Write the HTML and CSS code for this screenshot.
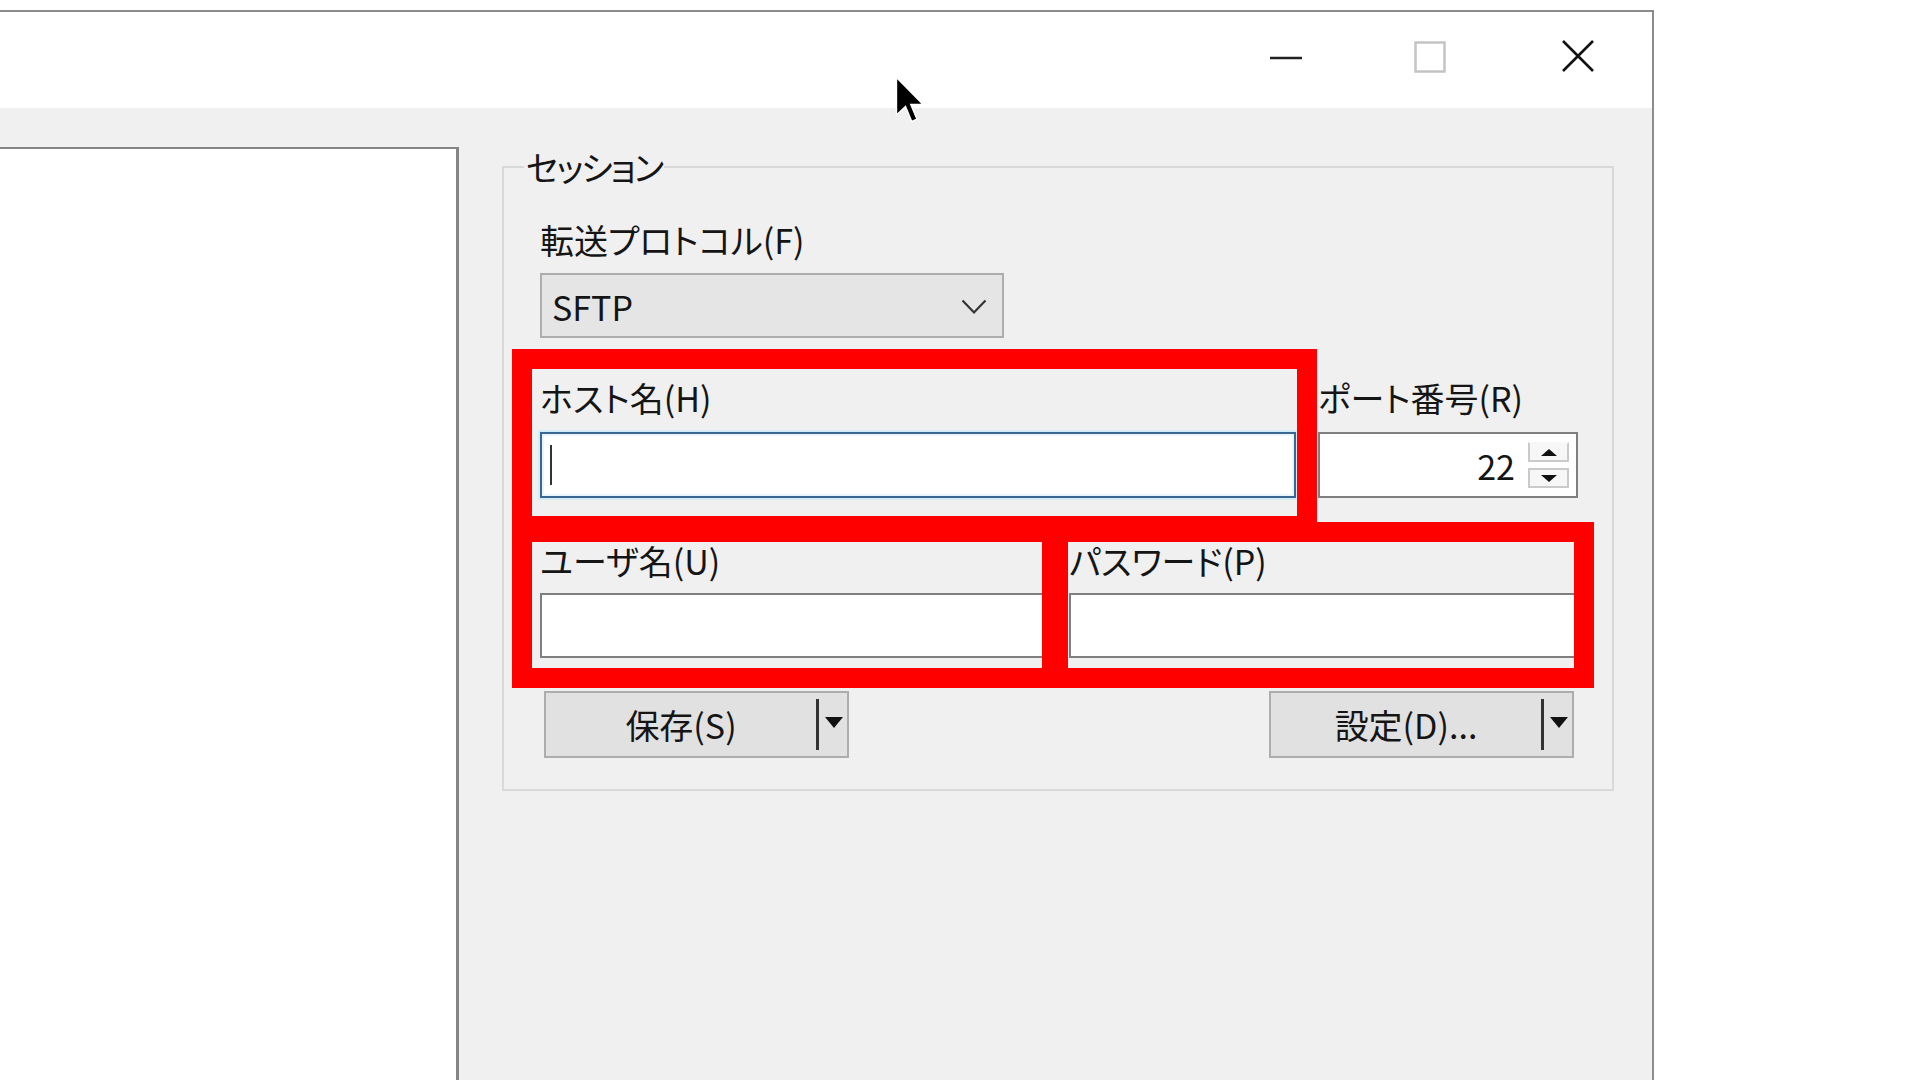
FILE: index.html
```html
<!DOCTYPE html>
<html lang="ja">
<head>
<meta charset="utf-8">
<title>ログイン</title>
<link rel="stylesheet" href="styles.css">
</head>
<body>
<div class="screen">
  <div class="window">
    <div class="titlebar">
      <div class="capbtn cap-min">
        <svg width="34" height="4" viewBox="0 0 34 4"><line x1="1" y1="2" x2="33" y2="2" stroke="#222" stroke-width="2.5"/></svg>
      </div>
      <div class="capbtn cap-max">
        <svg width="32" height="32" viewBox="0 0 32 32"><rect x="1.5" y="1.5" width="29" height="29" fill="none" stroke="#c4c4c4" stroke-width="2.5"/></svg>
      </div>
      <div class="capbtn cap-close">
        <svg width="34" height="34" viewBox="0 0 34 34"><path d="M2 2 L32 32 M32 2 L2 32" stroke="#111" stroke-width="2.6" fill="none"/></svg>
      </div>
    </div>
    <div class="client">
      <div class="sitepanel"></div>
      <fieldset class="session">
        <legend class="legend">セッション</legend>
        <div class="form">
          <div class="field proto">
            <label class="lbl">転送プロトコル(F)</label>
            <div class="combo">
              <span class="combo-text">SFTP</span>
              <svg class="chev" width="26" height="16" viewBox="0 0 26 16"><polyline points="1.5,1.5 13,13.5 24.5,1.5" fill="none" stroke="#333" stroke-width="2.2"/></svg>
            </div>
          </div>
          <div class="row host-row">
            <div class="field">
              <label class="lbl">ホスト名(H)</label>
              <div class="edit focused"><span class="caret"></span></div>
            </div>
            <div class="field">
              <label class="lbl">ポート番号(R)</label>
              <div class="edit port">
                <span class="num">22</span>
                <div class="spin">
                  <div class="spin-btn up"></div>
                  <div class="spin-btn down"></div>
                </div>
              </div>
            </div>
          </div>
          <div class="row user-row">
            <div class="field">
              <label class="lbl">ユーザ名(U)</label>
              <div class="edit plain"></div>
            </div>
            <div class="field">
              <label class="lbl">パスワード(P)</label>
              <div class="edit plain"></div>
            </div>
          </div>
          <div class="buttons">
            <div class="btn">
              <span class="btn-text">保存(S)</span>
              <span class="sep"></span>
              <span class="tri"></span>
            </div>
            <div class="btn">
              <span class="btn-text">設定(D)...</span>
              <span class="sep"></span>
              <span class="tri"></span>
            </div>
          </div>
        </div>
      </fieldset>
    </div>
  </div>

  <div class="mark mark-host"></div>
  <div class="mark mark-user"></div>
  <div class="mark mark-pass"></div>

  <svg class="cursor" width="33" height="53" viewBox="-1 -1 13.2 21.2">
    <path d="M0 0 V15 L3.6 11.6 L6.1 17.6 L8.2 16.7 L5.7 10.8 H10.6 Z" fill="#000" stroke="#fff" stroke-width="0.55" stroke-linejoin="miter"/>
  </svg>
</div>
</body>
</html>
```

FILE: styles.css
```css
html, body {
  margin: 0;
  padding: 0;
}

body {
  width: 1920px;
  height: 1080px;
  overflow: hidden;
  background: #ffffff;
  font-family: "Noto Sans CJK JP", "Liberation Sans", sans-serif;
  color: #151515;
}

.screen {
  position: relative;
  width: 1920px;
  height: 1080px;
  padding-top: 10px;
  box-sizing: border-box;
}

.window {
  width: 1654px;
  height: 1070px;
  box-sizing: border-box;
  border-top: 2px solid #8c8c8c;
  border-right: 2px solid #8c8c8c;
  background: #f0f0f0;
  display: flex;
  flex-direction: column;
}

/* title bar */
.titlebar {
  height: 96px;
  flex: none;
  background: #ffffff;
  display: flex;
  justify-content: flex-end;
}

.capbtn {
  width: 148px;
  display: flex;
  align-items: center;
  justify-content: center;
  padding-bottom: 6px;
  box-sizing: border-box;
}

.cap-min {
  padding-left: 8px;
  padding-bottom: 4px;
}

.cap-close {
  padding-bottom: 8px;
}

/* client area */
.client {
  flex: 1;
  display: flex;
  align-items: flex-start;
  padding-top: 39px;
}

.sitepanel {
  width: 459px;
  flex: none;
  align-self: stretch;
  background: #ffffff;
  border-top: 2px solid #848484;
  border-right: 3px solid #848484;
  box-sizing: border-box;
}

.session {
  margin: 0 0 0 43px;
  width: 1112px;
  min-inline-size: 0;
  box-sizing: border-box;
  border: 2px solid #d9d9d9;
  padding: 33px 34px 31px 36px;
}

.legend {
  font-size: 34px;
  line-height: 40px;
  padding: 0 2px;
  margin-left: -16px;
  letter-spacing: -2px;
  font-feature-settings: "palt";
  white-space: nowrap;
}

.form {
  display: flex;
  flex-direction: column;
}

.field {
  display: flex;
  flex-direction: column;
}

.lbl {
  display: block;
  font-size: 34px;
  line-height: 40px;
  font-feature-settings: "palt";
  white-space: nowrap;
}

.proto .lbl {
  margin-bottom: 13px;
}

.combo {
  width: 464px;
  height: 65px;
  box-sizing: border-box;
  background: #e5e5e5;
  border: 2px solid #adadad;
  display: flex;
  align-items: center;
  justify-content: space-between;
  padding: 3px 15px 0 10px;
}

.combo-text {
  font-size: 34px;
  line-height: 40px;
}

.chev {
  display: block;
}

.row {
  display: grid;
}

.host-row {
  margin-top: 40px;
  grid-template-columns: 756px 260px;
  column-gap: 22px;
}

.host-row .lbl {
  margin-bottom: 14px;
}

.user-row {
  margin-top: 43px;
  grid-template-columns: 1fr 1fr;
  column-gap: 20px;
}

.user-row .lbl {
  margin-bottom: 12px;
}

.edit {
  height: 66px;
  box-sizing: border-box;
  background: #ffffff;
  border: 2px solid #7f7f7f;
  display: flex;
  align-items: center;
}

.edit.plain {
  height: 65px;
}

.edit.focused {
  border-color: #3a6791;
  box-shadow: 0 0 0 2px #d3ecf8, inset 0 0 0 2px #eaf6fc;
}

.caret {
  width: 2px;
  height: 40px;
  margin-left: 8px;
  background: #333333;
}

.edit.port {
  justify-content: flex-end;
  padding-right: 7px;
}

.num {
  font-size: 34px;
  line-height: 40px;
  margin-right: 13px;
  margin-top: 1px;
}

.spin {
  display: flex;
  flex-direction: column;
  gap: 6px;
}

.spin-btn {
  width: 41px;
  height: 20px;
  box-sizing: border-box;
  border: 2px solid #cacaca;
  background: #f7f7f7;
  display: flex;
  align-items: center;
  justify-content: center;
}

.spin-btn.up {
  border-top-color: transparent;
}

.spin-btn.up::after {
  content: "";
  border-left: 8px solid transparent;
  border-right: 8px solid transparent;
  border-bottom: 7px solid #111111;
}

.spin-btn.down::after {
  content: "";
  border-left: 8px solid transparent;
  border-right: 8px solid transparent;
  border-top: 7px solid #111111;
}

/* buttons */
.buttons {
  margin-top: 33px;
  display: flex;
  justify-content: space-between;
  padding: 0 4px;
}

.btn {
  width: 305px;
  height: 67px;
  box-sizing: border-box;
  background: #e1e1e1;
  border: 2px solid #adadad;
  display: flex;
  align-items: center;
  padding-right: 4px;
}

.btn-text {
  flex: 1;
  text-align: center;
  font-size: 34px;
  line-height: 40px;
  font-feature-settings: "palt";
  white-space: nowrap;
}

.sep {
  width: 3px;
  height: 51px;
  background: #333333;
  margin-right: 6px;
}

.tri {
  width: 0;
  height: 0;
  border-left: 9px solid transparent;
  border-right: 9px solid transparent;
  border-top: 11px solid #111111;
  margin-bottom: 5px;
}

/* red annotation boxes */
.mark {
  position: absolute;
  box-sizing: border-box;
  border: 20px solid #ff0000;
}

.mark-host {
  left: 512px;
  top: 349px;
  width: 805px;
  height: 187px;
}

.mark-user {
  left: 512px;
  top: 522px;
  width: 550px;
  height: 166px;
}

.mark-pass {
  left: 1048px;
  top: 522px;
  width: 546px;
  height: 166px;
}

.cursor {
  position: absolute;
  left: 894px;
  top: 75px;
}
```
